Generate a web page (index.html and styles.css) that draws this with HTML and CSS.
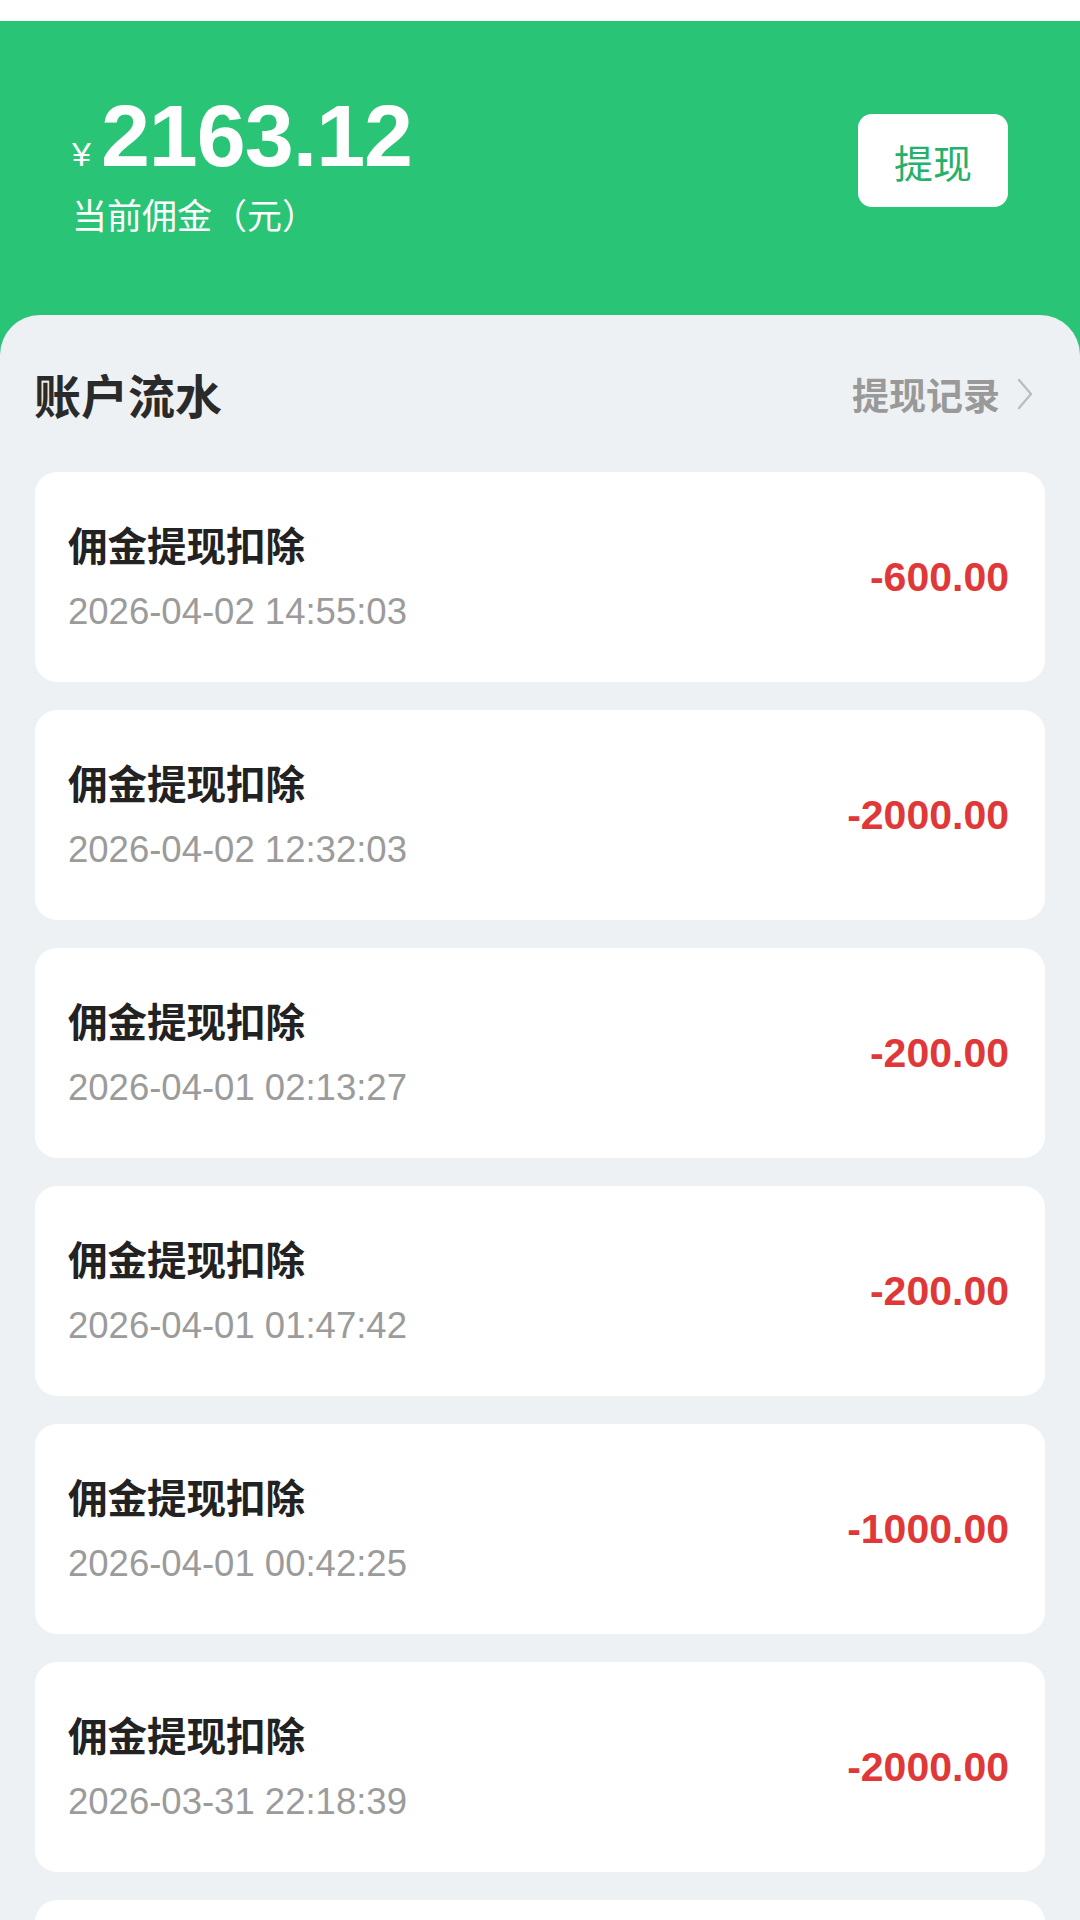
FILE: index.html
```html
<!DOCTYPE html>
<html lang="zh-CN">
<head>
    <meta charset="UTF-8">
    <meta name="viewport" content="width=device-width, initial-scale=1.0">
    <title>我的佣金</title>
    <link rel="stylesheet" href="styles.css">
</head>
<body>
    <div class="page">
        <div class="status-bar"></div>

        <div class="header">
            <div class="balance">
                <div class="amount-line">
                    <span class="currency">¥</span>
                    <span class="amount">2163.12</span>
                </div>
                <div class="balance-label">当前佣金（元）</div>
            </div>
            <button class="withdraw-btn">提现</button>
        </div>

        <div class="panel">
            <div class="section-head">
                <h2>账户流水</h2>
                <a class="records-link" href="#">
                    提现记录
                    <svg class="chevron" width="18" height="32" viewBox="0 0 18 32">
                        <path d="M3 2 L15 16 L3 30" fill="none" stroke="#bdbdbd" stroke-width="2.4" stroke-linecap="round" stroke-linejoin="round"/>
                    </svg>
                </a>
            </div>

            <div class="list">
                <div class="item">
                    <div class="item-info">
                        <div class="item-title">佣金提现扣除</div>
                        <div class="item-time">2026-04-02 14:55:03</div>
                    </div>
                    <div class="item-amount">-600.00</div>
                </div>
                <div class="item">
                    <div class="item-info">
                        <div class="item-title">佣金提现扣除</div>
                        <div class="item-time">2026-04-02 12:32:03</div>
                    </div>
                    <div class="item-amount">-2000.00</div>
                </div>
                <div class="item">
                    <div class="item-info">
                        <div class="item-title">佣金提现扣除</div>
                        <div class="item-time">2026-04-01 02:13:27</div>
                    </div>
                    <div class="item-amount">-200.00</div>
                </div>
                <div class="item">
                    <div class="item-info">
                        <div class="item-title">佣金提现扣除</div>
                        <div class="item-time">2026-04-01 01:47:42</div>
                    </div>
                    <div class="item-amount">-200.00</div>
                </div>
                <div class="item">
                    <div class="item-info">
                        <div class="item-title">佣金提现扣除</div>
                        <div class="item-time">2026-04-01 00:42:25</div>
                    </div>
                    <div class="item-amount">-1000.00</div>
                </div>
                <div class="item">
                    <div class="item-info">
                        <div class="item-title">佣金提现扣除</div>
                        <div class="item-time">2026-03-31 22:18:39</div>
                    </div>
                    <div class="item-amount">-2000.00</div>
                </div>
                <div class="item"></div>
            </div>
        </div>
    </div>
</body>
</html>
```

FILE: styles.css
```css
* {
    box-sizing: border-box;
}

body {
    margin: 0;
    font-family: "Liberation Sans", "Noto Sans CJK SC", sans-serif;
    background-color: #eef1f4;
    color: #222;
}

.page {
    height: 1920px;
    overflow: hidden;
    background-color: #29c476;
}

.status-bar {
    height: 21px;
    background: #fff;
}

/* 顶部余额 */
.header {
    height: 294px;
    display: flex;
    justify-content: space-between;
    align-items: flex-start;
    padding: 70px 72px 0 72px;
}

.amount-line {
    display: flex;
    align-items: baseline;
    height: 90px;
    color: #fff;
}

.currency {
    font-size: 34px;
    margin-right: 10px;
}

.amount {
    font-size: 88px;
    line-height: 90px;
    font-weight: bold;
    letter-spacing: -1px;
}

.balance-label {
    margin-top: 12px;
    font-size: 35px;
    line-height: 42px;
    color: #fff;
    font-family: "Noto Sans CJK SC", sans-serif;
}

.withdraw-btn {
    margin-top: 23px;
    width: 150px;
    height: 93px;
    border: none;
    border-radius: 14px;
    background: #fff;
    color: #25b06b;
    font-size: 39px;
    font-family: "Noto Sans CJK SC", sans-serif;
    cursor: pointer;
}

/* 账户流水 */
.panel {
    background-color: #eef1f4;
    border-radius: 40px 40px 0 0;
    height: 1605px;
}

.section-head {
    height: 157px;
    display: flex;
    justify-content: space-between;
    align-items: center;
    padding: 0 46px 0 34px;
}

.section-head h2 {
    margin: 0;
    font-size: 47px;
    font-weight: bold;
    color: #2a2a2a;
    font-family: "Noto Sans CJK SC", sans-serif;
}

.records-link {
    display: flex;
    align-items: center;
    gap: 16px;
    color: #999;
    font-size: 37px;
    font-weight: bold;
    text-decoration: none;
    font-family: "Noto Sans CJK SC", sans-serif;
}

.list {
    display: flex;
    flex-direction: column;
    gap: 28px;
    padding: 0 35px;
}

.item {
    flex-shrink: 0;
    height: 210px;
    display: flex;
    justify-content: space-between;
    align-items: center;
    padding: 0 36px 0 33px;
    background: #fff;
    border-radius: 22px;
}

.item-title {
    font-size: 39.5px;
    line-height: 48px;
    font-weight: bold;
    color: #222;
    font-family: "Noto Sans CJK SC", sans-serif;
}

.item-time {
    margin-top: 22px;
    font-size: 36.5px;
    line-height: 44px;
    color: #9b9b9b;
}

.item-amount {
    font-size: 41px;
    font-weight: bold;
    color: #e03838;
}
```
